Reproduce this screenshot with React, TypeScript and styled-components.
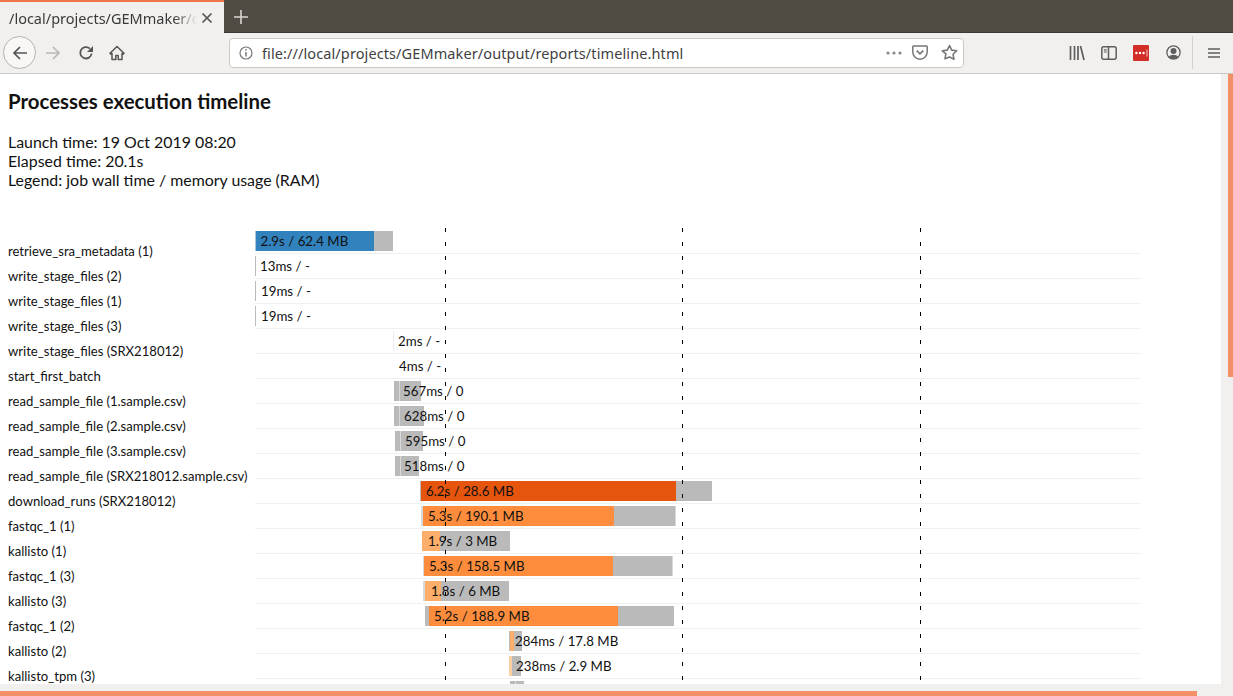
import React from "react";
import styled, { createGlobalStyle } from "styled-components";

const GlobalStyle = createGlobalStyle`
  html, body {
    margin: 0;
    padding: 0;
    overflow: hidden;
    background: #f2f0ee;
  }
`;

const Browser = styled.div`
  width: 1233px;
  height: 696px;
  display: flex;
  flex-direction: column;
  overflow: hidden;
  font-family: Lato, sans-serif;
`;

const TabStrip = styled.div`
  height: 33px;
  flex: none;
  display: flex;
  align-items: stretch;
  background: #504c44;
  box-shadow: inset 0 -1px 0 #3c3933;
`;

const Tab = styled.div`
  width: 224px;
  box-sizing: border-box;
  border-top: 2px solid #f0764a;
  background: #f2f0ee;
  display: flex;
  align-items: center;
  padding: 0 11px 0 9px;
  justify-content: space-between;
  font-family: "Noto Sans", sans-serif;
  font-size: 14.5px;
  color: #3a3a3a;
`;

const TabTitle = styled.span`
  width: 188px;
  overflow: hidden;
  white-space: nowrap;
  -webkit-mask-image: linear-gradient(to right, #000 165px, transparent 188px);
  mask-image: linear-gradient(to right, #000 165px, transparent 188px);
`;

const NewTab = styled.div`
  width: 33px;
  display: flex;
  align-items: center;
  justify-content: center;
`;

const Toolbar = styled.div`
  height: 41px;
  flex: none;
  box-sizing: border-box;
  display: flex;
  align-items: center;
  background: #f2f0ee;
  border-bottom: 1px solid #cbc9c6;
  padding: 0 0 1px 3px;
`;

const BackButton = styled.div`
  width: 33px;
  height: 33px;
  box-sizing: border-box;
  border: 1px solid #b4b2af;
  border-radius: 50%;
  background: #f8f7f6;
  display: flex;
  align-items: center;
  justify-content: center;
`;

const NavButton = styled.div<{ $w: number }>`
  width: ${(p) => p.$w}px;
  height: 28px;
  flex: none;
  display: flex;
  align-items: center;
  justify-content: center;
`;

const AddressBar = styled.div`
  width: 735px;
  height: 30px;
  margin: 0 97px 0 97px;
  flex: none;
  box-sizing: border-box;
  display: flex;
  align-items: center;
  background: #fff;
  border: 1px solid #ccc9c6;
  border-radius: 4px;
  padding: 0 3px 0 9px;
`;

const UrlText = styled.div`
  flex: 1;
  margin-left: 9px;
  font-family: "Noto Sans", sans-serif;
  font-size: 14.5px;
  letter-spacing: 0.1px;
  color: #3f3f3f;
  white-space: nowrap;
`;

const ToolbarDivider = styled.div`
  width: 1px;
  height: 33px;
  background: #d3d1ce;
  margin: 0 15px 0 3px;
`;

const Viewport = styled.div`
  flex: 1;
  min-height: 0;
  display: flex;
`;

const Page = styled.div`
  flex: 1;
  min-width: 0;
  background: #fff;
  overflow: hidden;
  color: #111;
`;

const Title = styled.h3`
  margin: 0;
  padding: 15px 0 0 8px;
  font-size: 20.4px;
  line-height: 24px;
  font-weight: 700;
`;

const Info = styled.div`
  margin-top: 19px;
  padding-left: 8px;
  font-size: 15.9px;
  line-height: 19px;
`;

const Timeline = styled.div`
  position: relative;
  margin-top: 40px;
  display: grid;
  grid-template-columns: 254.5px 886px;
`;

const Labels = styled.div`
  padding: 10px 0 0 8px;
  height: 0;
`;

const Label = styled.div`
  height: 25px;
  line-height: 25px;
  font-size: 13.1px;
  white-space: nowrap;
`;

const Chart = styled.div`
  position: relative;
`;

const Row = styled.div`
  position: relative;
  height: 25px;
  box-sizing: border-box;
  border-bottom: 1px solid #f0f0f0;
`;

const Bar = styled.div`
  position: absolute;
  top: 2px;
  height: 20px;
  display: flex;
`;

const Segment = styled.div<{ $x: number; $w: number; $c: string }>`
  position: absolute;
  top: 0;
  left: ${(p) => p.$x}px;
  width: ${(p) => p.$w}px;
  height: 100%;
  background: ${(p) => p.$c};
`;

const BarLabel = styled.span<{ $x: number }>`
  position: absolute;
  top: 2px;
  left: ${(p) => p.$x}px;
  line-height: 20px;
  font-size: 13.3px;
  color: #111;
  white-space: nowrap;
`;

const Tick = styled.div<{ $x: number }>`
  position: absolute;
  top: -1px;
  bottom: 0;
  left: ${(p) => p.$x}px;
  width: 1px;
  background: repeating-linear-gradient(to bottom, #000 0 4px, transparent 4px 14px);
`;

const VScroll = styled.div`
  width: 12px;
  flex: none;
  position: relative;
  background: #f2f0ee;
`;

const VThumb = styled.div`
  position: absolute;
  top: 0;
  left: 7px;
  width: 5px;
  height: 303px;
  background: #f49068;
`;

const HScroll = styled.div`
  height: 12px;
  flex: none;
  position: relative;
  background: #f2f0ee;
`;

const HThumb = styled.div`
  position: absolute;
  left: 0;
  bottom: 0;
  width: 1197px;
  height: 5px;
  background: #f49068;
`;

const GREY = "#bababa";
const LIGHT = "#d9d9d9";
const BLUE = "#3182bd";
const DEEP = "#e6550d";
const ORANGE = "#fd8d3c";
const PEACH = "#fdae6b";
const PALE = "#fdd0a2";

// x positions are page pixels, minus the chart's left edge
const X0 = 254.5;

type Seg = [number, number, string];
type Item = { label?: string; text?: string; tx?: number; segs: Seg[] };

const items: Item[] = [
  { label: "retrieve_sra_metadata (1)", text: "2.9s / 62.4 MB", tx: 260.5, segs: [[255, 1, "#a9c6dc"], [256, 118, BLUE], [374, 18.7, GREY]] },
  { label: "write_stage_files (2)", text: "13ms / -", tx: 260, segs: [[255, 1, GREY]] },
  { label: "write_stage_files (1)", text: "19ms / -", tx: 261, segs: [[255, 1, GREY]] },
  { label: "write_stage_files (3)", text: "19ms / -", tx: 261, segs: [[255, 1, GREY]] },
  { label: "write_stage_files (SRX218012)", text: "2ms / -", tx: 398, segs: [[393, 1, "#ececec"]] },
  { label: "start_first_batch", text: "4ms / -", tx: 399, segs: [] },
  { label: "read_sample_file (1.sample.csv)", text: "567ms / 0", tx: 403, segs: [[394, 26.7, GREY], [398.5, 1, LIGHT]] },
  { label: "read_sample_file (2.sample.csv)", text: "628ms / 0", tx: 404, segs: [[394, 30, GREY], [398.7, 1, LIGHT]] },
  { label: "read_sample_file (3.sample.csv)", text: "595ms / 0", tx: 405, segs: [[394.7, 28, GREY], [399.5, 1, LIGHT]] },
  { label: "read_sample_file (SRX218012.sample.csv)", text: "518ms / 0", tx: 404, segs: [[395, 24, GREY], [399.5, 1, LIGHT]] },
  { label: "download_runs (SRX218012)", text: "6.2s / 28.6 MB", tx: 426, segs: [[420, 1, GREY], [421, 255, DEEP], [676, 36, GREY]] },
  { label: "fastqc_1 (1)", text: "5.3s / 190.1 MB", tx: 428, segs: [[421.3, 1.4, LIGHT], [422.7, 191, ORANGE], [613.7, 61, GREY], [674.7, 1, LIGHT]] },
  { label: "kallisto (1)", text: "1.9s / 3 MB", tx: 428, segs: [[422, 18, PEACH], [440, 70, GREY]] },
  { label: "fastqc_1 (3)", text: "5.3s / 158.5 MB", tx: 429, segs: [[423, 1, LIGHT], [424, 189, ORANGE], [613, 58.7, GREY], [671.7, 1.3, LIGHT]] },
  { label: "kallisto (3)", text: "1.8s / 6 MB", tx: 431, segs: [[423.3, 1.4, LIGHT], [424.7, 16.6, PEACH], [441.3, 67.4, GREY]] },
  { label: "fastqc_1 (2)", text: "5.2s / 188.9 MB", tx: 434, segs: [[425.3, 3.7, GREY], [429, 189, ORANGE], [618, 56, GREY]] },
  { label: "kallisto (2)", text: "284ms / 17.8 MB", tx: 515, segs: [[509, 1.3, GREY], [510.3, 3.4, PEACH], [513.7, 8.6, GREY]] },
  { label: "kallisto_tpm (3)", text: "238ms / 2.9 MB", tx: 516, segs: [[509, 3.3, PALE], [512.3, 8.4, GREY]] },
  { segs: [[510.3, 13.4, GREY], [514.5, 1, LIGHT]] },
];

const ticks = [445, 682, 920];

const Icon = ({ w, h = w, children }: { w: number; h?: number; children: React.ReactNode }) => (
  <svg width={w} height={h} viewBox={`0 0 ${w} ${h}`} fill="none">
    {children}
  </svg>
);

export default function App() {
  return (
    <Browser>
      <GlobalStyle />
      <TabStrip>
        <Tab>
          <TabTitle>/local/projects/GEMmaker/o</TabTitle>
          <Icon w={12}>
            <path d="M1.5 1.5l9 9M10.5 1.5l-9 9" stroke="#555" strokeWidth="1.7" />
          </Icon>
        </Tab>
        <NewTab>
          <Icon w={14}>
            <path d="M7 0v14M0 7h14" stroke="#d8d6d2" strokeWidth="1.6" />
          </Icon>
        </NewTab>
      </TabStrip>

      <Toolbar>
        <BackButton>
          <Icon w={16}>
            <path d="M15 8H2M8 2L2 8l6 6" stroke="#555" strokeWidth="1.7" />
          </Icon>
        </BackButton>
        <NavButton $w={33}>
          <Icon w={16}>
            <path d="M1 8h13M8 2l6 6-6 6" stroke="#b9b8b6" strokeWidth="1.7" />
          </Icon>
        </NavButton>
        <NavButton $w={33}>
          <Icon w={16}>
            <path d="M13.6 8.5A5.7 5.7 0 1 1 11.8 3.6" stroke="#555" strokeWidth="1.8" />
            <path d="M15 1v6H9z" fill="#555" />
          </Icon>
        </NavButton>
        <NavButton $w={30}>
          <Icon w={16}>
            <path d="M8 1.5L1 8.3l1 1L3 8.4V14.5h3.8V10.5h2.4v4H13V8.4l1 .9 1-1z" stroke="#555" strokeWidth="1.5" strokeLinejoin="round" />
          </Icon>
        </NavButton>
        <AddressBar>
          <Icon w={14}>
            <circle cx="7" cy="7" r="6" stroke="#777" strokeWidth="1.2" />
            <path d="M7 6v4.5" stroke="#777" strokeWidth="1.5" />
            <circle cx="7" cy="3.8" r="0.9" fill="#777" />
          </Icon>
          <UrlText>file:///local/projects/GEMmaker/output/reports/timeline.html</UrlText>
          <Icon w={16} h={4}>
            <circle cx="2" cy="2" r="1.6" fill="#888" />
            <circle cx="8" cy="2" r="1.6" fill="#888" />
            <circle cx="14" cy="2" r="1.6" fill="#888" />
          </Icon>
          <NavButton $w={36}>
            <Icon w={16} h={15}>
              <path d="M1.5 1h13a.7.7 0 0 1 .7.7V7A7.2 7.2 0 0 1 .8 7V1.7a.7.7 0 0 1 .7-.7z" stroke="#777" strokeWidth="1.5" />
              <path d="M4.7 5.6L8 8.8l3.3-3.2" stroke="#777" strokeWidth="1.7" />
            </Icon>
          </NavButton>
          <NavButton $w={22}>
            <Icon w={17}>
              <path d="M8.5 1.5l2.2 4.6 5 .7-3.6 3.5.9 5-4.5-2.4L4 14.8l.9-5L1.3 6.8l5-.7z" stroke="#777" strokeWidth="1.6" strokeLinejoin="round" />
            </Icon>
          </NavButton>
        </AddressBar>
        <NavButton $w={32}>
          <Icon w={16}>
            <path d="M1.5 1v14M5.5 1v14M9 1v14M11.5 1l3.5 14" stroke="#5e5e5e" strokeWidth="1.7" />
          </Icon>
        </NavButton>
        <NavButton $w={32}>
          <Icon w={16} h={14}>
            <rect x="0.8" y="0.8" width="14.4" height="12.4" rx="2" stroke="#5e5e5e" strokeWidth="1.5" />
            <path d="M7.5 1v12" stroke="#5e5e5e" strokeWidth="1.5" />
            <path d="M2.8 3.8h3M2.8 6h3" stroke="#5e5e5e" strokeWidth="1.2" />
          </Icon>
        </NavButton>
        <NavButton $w={32}>
          <Icon w={16}>
            <rect width="16" height="16" rx="1" fill="#d32d27" />
            <circle cx="3.4" cy="8" r="1.2" fill="#fff" />
            <circle cx="7" cy="8" r="1.2" fill="#fff" />
            <circle cx="10.6" cy="8" r="1.2" fill="#fff" />
            <path d="M14 4.5v7" stroke="#f4c4c0" strokeWidth="1" />
          </Icon>
        </NavButton>
        <NavButton $w={32}>
          <Icon w={15}>
            <circle cx="7.5" cy="7.5" r="6.6" stroke="#5e5e5e" strokeWidth="1.3" />
            <circle cx="7.5" cy="6" r="3" fill="#5e5e5e" />
            <path d="M2.8 12a5 3.4 0 0 1 9.4 0 6.6 6.6 0 0 1-9.4 0z" fill="#5e5e5e" />
          </Icon>
        </NavButton>
        <ToolbarDivider />
        <Icon w={12}>
          <path d="M0 2h12M0 6h12M0 10h12" stroke="#5e5e5e" strokeWidth="1.7" />
        </Icon>
      </Toolbar>

      <Viewport>
        <Page>
          <Title>Processes execution timeline</Title>
          <Info>
            <div>Launch time: 19 Oct 2019 08:20</div>
            <div>Elapsed time: 20.1s</div>
            <div>Legend: job wall time / memory usage (RAM)</div>
          </Info>
          <Timeline>
            <Labels>
              {items
                .filter((item) => item.label)
                .map((item) => (
                  <Label key={item.label}>{item.label}</Label>
                ))}
            </Labels>
            <Chart>
              {items.map((item, i) => (
                <Row key={i}>
                  <Bar>
                    {item.segs.map(([x, w, c]) => (
                      <Segment key={x} $x={x - X0} $w={w} $c={c} />
                    ))}
                  </Bar>
                  {item.text && <BarLabel $x={item.tx! - X0}>{item.text}</BarLabel>}
                </Row>
              ))}
              {ticks.map((x) => (
                <Tick key={x} $x={x - X0} />
              ))}
            </Chart>
          </Timeline>
        </Page>
        <VScroll>
          <VThumb />
        </VScroll>
      </Viewport>
      <HScroll>
        <HThumb />
      </HScroll>
    </Browser>
  );
}
